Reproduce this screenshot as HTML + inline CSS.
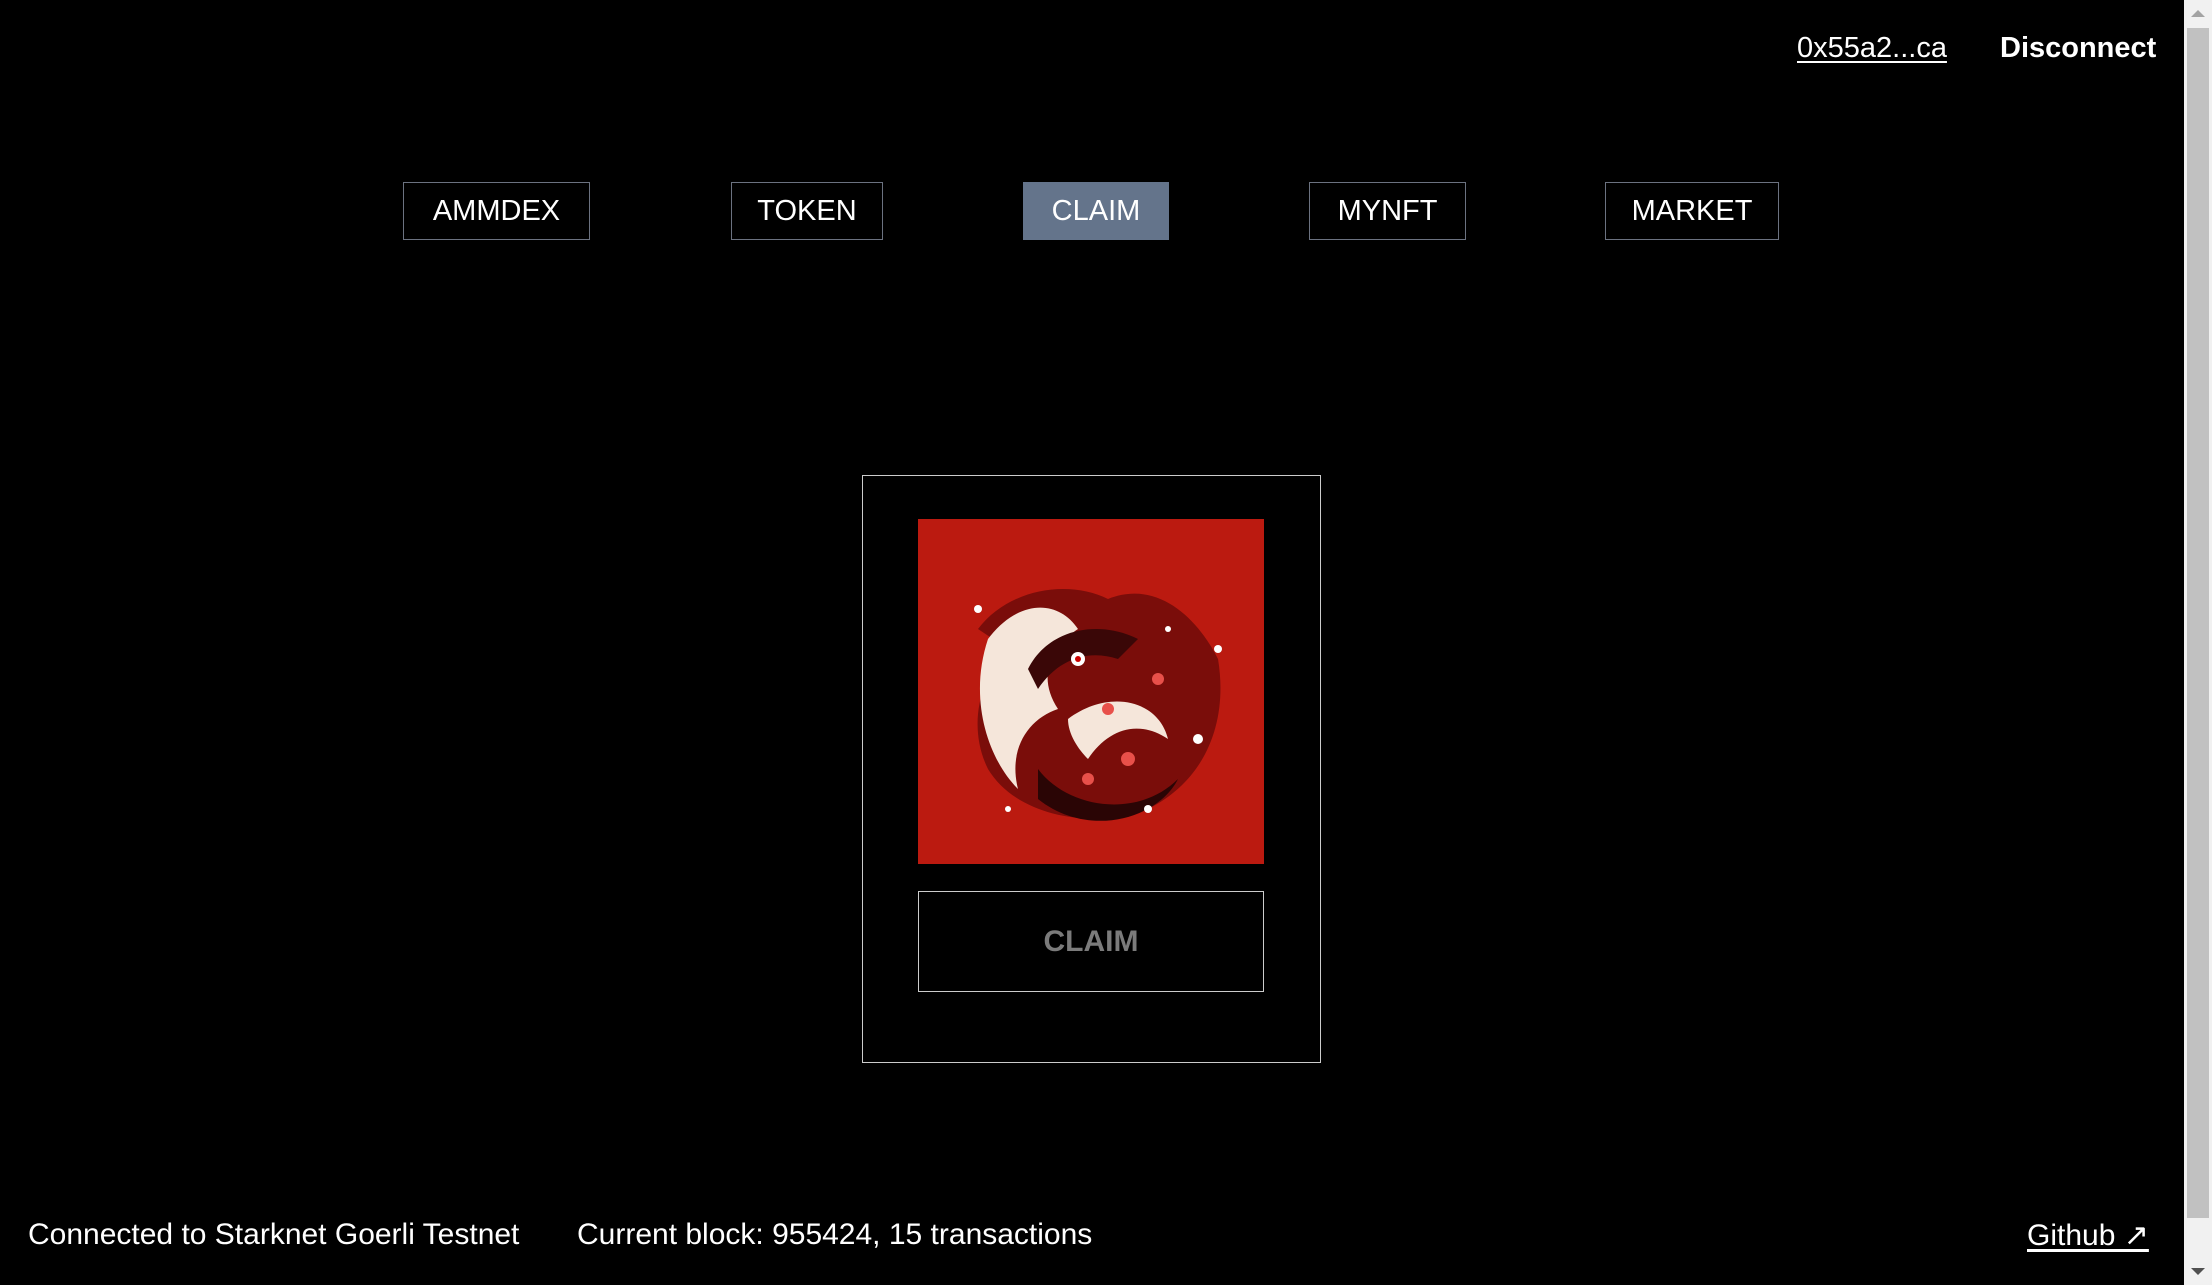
<!DOCTYPE html>
<html><head><meta charset="utf-8"><style>
*{margin:0;padding:0;box-sizing:border-box}
html,body{width:2212px;height:1285px;overflow:hidden;background:#000;color:#fff;font-family:"Liberation Sans",sans-serif}
.abs{position:absolute;white-space:nowrap}
.nav{position:absolute;top:182px;height:58px;border:1.5px solid #6b7280;display:flex;align-items:center;justify-content:center;font-size:29px;color:#fff}
</style></head><body>
<div class="abs" style="left:1797px;top:32px;font-size:29px;text-decoration:underline;text-underline-offset:4px">0x55a2...ca</div>
<div class="abs" style="left:2000px;top:32px;font-size:29px;font-weight:bold">Disconnect</div>

<div class="nav" style="left:403px;width:187px">AMMDEX</div>
<div class="nav" style="left:731px;width:152px">TOKEN</div>
<div class="nav" style="left:1023px;width:146px;background:#64748b;border-color:#64748b">CLAIM</div>
<div class="nav" style="left:1309px;width:157px">MYNFT</div>
<div class="nav" style="left:1605px;width:174px">MARKET</div>

<div style="position:absolute;left:862px;top:475px;width:459px;height:588px;border:1.5px solid #ccc"></div>
<svg style="position:absolute;left:918px;top:519px" width="346" height="345" viewBox="0 0 346 345">
<rect width="346" height="345" fill="#bb1a10"/>
<path d="M60 110 C90 70 150 60 190 80 C240 60 280 100 300 140 C310 200 290 260 230 290 C180 310 100 300 70 250 C50 210 60 160 90 130 Z" fill="#7a0d0a"/>
<path d="M70 120 C100 80 140 80 160 110 C130 130 120 160 140 190 C110 200 90 230 100 270 C70 240 50 180 70 120 Z" fill="#f5e6da"/>
<path d="M150 200 C190 170 240 180 250 220 C220 200 190 210 170 240 C160 230 150 215 150 200 Z" fill="#f5e6da"/>
<path d="M120 250 C150 290 220 300 260 260 C240 300 170 320 120 280 Z" fill="#2a0505"/>
<path d="M110 150 C130 110 180 100 220 120 L200 140 C170 130 140 140 120 170 Z" fill="#3a0707"/>
<circle cx="160" cy="140" r="7" fill="#fff"/><circle cx="160" cy="140" r="3" fill="#c00"/>
<g fill="#fff"><circle cx="60" cy="90" r="4"/><circle cx="300" cy="130" r="4"/><circle cx="280" cy="220" r="5"/><circle cx="230" cy="290" r="4"/><circle cx="90" cy="290" r="3"/><circle cx="250" cy="110" r="3"/></g>
<g fill="#e8504a"><circle cx="190" cy="190" r="6"/><circle cx="210" cy="240" r="7"/><circle cx="170" cy="260" r="6"/><circle cx="240" cy="160" r="6"/></g>
</svg>
<div style="position:absolute;left:918px;top:891px;width:346px;height:101px;border:1.5px solid #ccc;display:flex;align-items:center;justify-content:center;font-size:30px;font-weight:bold;color:#7b7b7b">CLAIM</div>

<div class="abs" style="left:28px;top:1218px;font-size:30px">Connected to Starknet Goerli Testnet</div>
<div class="abs" style="left:577px;top:1218px;font-size:30px">Current block: 955424, 15 transactions</div>
<div class="abs" style="left:2027px;top:1218px;font-size:30px;text-decoration:underline;text-underline-offset:4px">Github ↗</div>

<div style="position:absolute;left:2184px;top:0;width:28px;height:1285px;background:#f1f1f1"></div>
<div style="position:absolute;left:2187px;top:28px;width:22px;height:1190px;background:#c1c1c1"></div>
<div style="position:absolute;left:2191px;top:10px;width:0;height:0;border-left:7px solid transparent;border-right:7px solid transparent;border-bottom:7px solid #a3a3a3"></div>
<div style="position:absolute;left:2191px;top:1268px;width:0;height:0;border-left:7px solid transparent;border-right:7px solid transparent;border-top:7px solid #505050"></div>
</body></html>
